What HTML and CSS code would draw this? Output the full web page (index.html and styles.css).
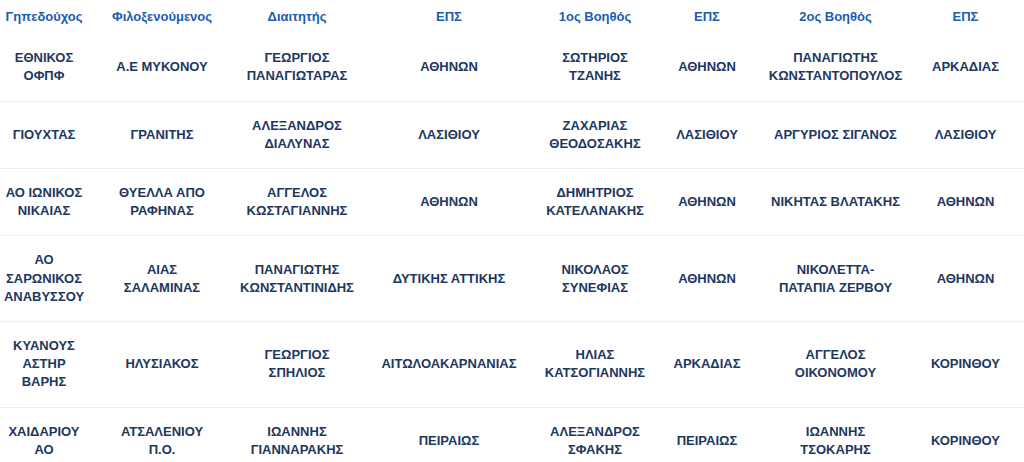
FILE: index.html
```html
<!DOCTYPE html>
<html lang="el">
<head>
<meta charset="utf-8">
<link rel="stylesheet" href="styles.css">
</head>
<body>
<table class="fixtures">
  <colgroup>
    <col class="c1"><col class="c2"><col class="c3"><col class="c4"><col class="c5"><col class="c6"><col class="c7"><col class="c8">
  </colgroup>
  <thead>
    <tr>
      <th>Γηπεδούχος</th><th>Φιλοξενούμενος</th><th>Διαιτητής</th><th>ΕΠΣ</th><th>1ος Βοηθός</th><th>ΕΠΣ</th><th>2ος Βοηθός</th><th>ΕΠΣ</th>
    </tr>
  </thead>
  <tbody>
    <tr>
      <td>ΕΘΝΙΚΟΣ<br>ΟΦΠΦ</td><td>Α.Ε ΜΥΚΟΝΟΥ</td><td>ΓΕΩΡΓΙΟΣ<br>ΠΑΝΑΓΙΩΤΑΡΑΣ</td><td>ΑΘΗΝΩΝ</td><td>ΣΩΤΗΡΙΟΣ<br>ΤΖΑΝΗΣ</td><td>ΑΘΗΝΩΝ</td><td>ΠΑΝΑΓΙΩΤΗΣ<br>ΚΩΝΣΤΑΝΤΟΠΟΥΛΟΣ</td><td>ΑΡΚΑΔΙΑΣ</td>
    </tr>
    <tr>
      <td>ΓΙΟΥΧΤΑΣ</td><td>ΓΡΑΝΙΤΗΣ</td><td>ΑΛΕΞΑΝΔΡΟΣ<br>ΔΙΑΛΥΝΑΣ</td><td>ΛΑΣΙΘΙΟΥ</td><td>ΖΑΧΑΡΙΑΣ<br>ΘΕΟΔΟΣΑΚΗΣ</td><td>ΛΑΣΙΘΙΟΥ</td><td>ΑΡΓΥΡΙΟΣ ΣΙΓΑΝΟΣ</td><td>ΛΑΣΙΘΙΟΥ</td>
    </tr>
    <tr>
      <td>ΑΟ ΙΩΝΙΚΟΣ<br>ΝΙΚΑΙΑΣ</td><td>ΘΥΕΛΛΑ ΑΠΟ<br>ΡΑΦΗΝΑΣ</td><td>ΑΓΓΕΛΟΣ<br>ΚΩΣΤΑΓΙΑΝΝΗΣ</td><td>ΑΘΗΝΩΝ</td><td>ΔΗΜΗΤΡΙΟΣ<br>ΚΑΤΕΛΑΝΑΚΗΣ</td><td>ΑΘΗΝΩΝ</td><td>ΝΙΚΗΤΑΣ ΒΛΑΤΑΚΗΣ</td><td>ΑΘΗΝΩΝ</td>
    </tr>
    <tr>
      <td>ΑΟ<br>ΣΑΡΩΝΙΚΟΣ<br>ΑΝΑΒΥΣΣΟΥ</td><td>ΑΙΑΣ<br>ΣΑΛΑΜΙΝΑΣ</td><td>ΠΑΝΑΓΙΩΤΗΣ<br>ΚΩΝΣΤΑΝΤΙΝΙΔΗΣ</td><td>ΔΥΤΙΚΗΣ ΑΤΤΙΚΗΣ</td><td>ΝΙΚΟΛΑΟΣ<br>ΣΥΝΕΦΙΑΣ</td><td>ΑΘΗΝΩΝ</td><td>ΝΙΚΟΛΕΤΤΑ-<br>ΠΑΤΑΠΙΑ ΖΕΡΒΟΥ</td><td>ΑΘΗΝΩΝ</td>
    </tr>
    <tr>
      <td>ΚΥΑΝΟΥΣ<br>ΑΣΤΗΡ<br>ΒΑΡΗΣ</td><td>ΗΛΥΣΙΑΚΟΣ</td><td>ΓΕΩΡΓΙΟΣ<br>ΣΠΗΛΙΟΣ</td><td>ΑΙΤΩΛΟΑΚΑΡΝΑΝΙΑΣ</td><td>ΗΛΙΑΣ<br>ΚΑΤΣΟΓΙΑΝΝΗΣ</td><td>ΑΡΚΑΔΙΑΣ</td><td>ΑΓΓΕΛΟΣ<br>ΟΙΚΟΝΟΜΟΥ</td><td>ΚΟΡΙΝΘΟΥ</td>
    </tr>
    <tr>
      <td>ΧΑΙΔΑΡΙΟΥ<br>ΑΟ</td><td>ΑΤΣΑΛΕΝΙΟΥ<br>Π.Ο.</td><td>ΙΩΑΝΝΗΣ<br>ΓΙΑΝΝΑΡΑΚΗΣ</td><td>ΠΕΙΡΑΙΩΣ</td><td>ΑΛΕΞΑΝΔΡΟΣ<br>ΣΦΑΚΗΣ</td><td>ΠΕΙΡΑΙΩΣ</td><td>ΙΩΑΝΝΗΣ<br>ΤΣΟΚΑΡΗΣ</td><td>ΚΟΡΙΝΘΟΥ</td>
    </tr>
  </tbody>
</table>
</body>
</html>
```

FILE: styles.css
```css
html, body {
  margin: 0;
  padding: 0;
  background: #ffffff;
}

.fixtures {
  width: 1024px;
  table-layout: fixed;
  border-collapse: collapse;
  font-family: "Liberation Sans", Arial, sans-serif;
  font-size: 13px;
  font-weight: bold;
  line-height: 18.2px;
  text-align: center;
}

.c1 { width: 88px; }
.c2 { width: 148px; }
.c3 { width: 122px; }
.c4 { width: 182px; }
.c5 { width: 110px; }
.c6 { width: 114px; }
.c7 { width: 143px; }
.c8 { width: 117px; }

.fixtures th {
  color: #1b5cb0;
  padding: 8px 2px;
  font-weight: bold;
  white-space: nowrap;
}

.fixtures td {
  color: #1d3760;
  padding: 15px 2px;
  border-bottom: 1px solid #eeeeee;
  vertical-align: middle;
  white-space: nowrap;
}
```
